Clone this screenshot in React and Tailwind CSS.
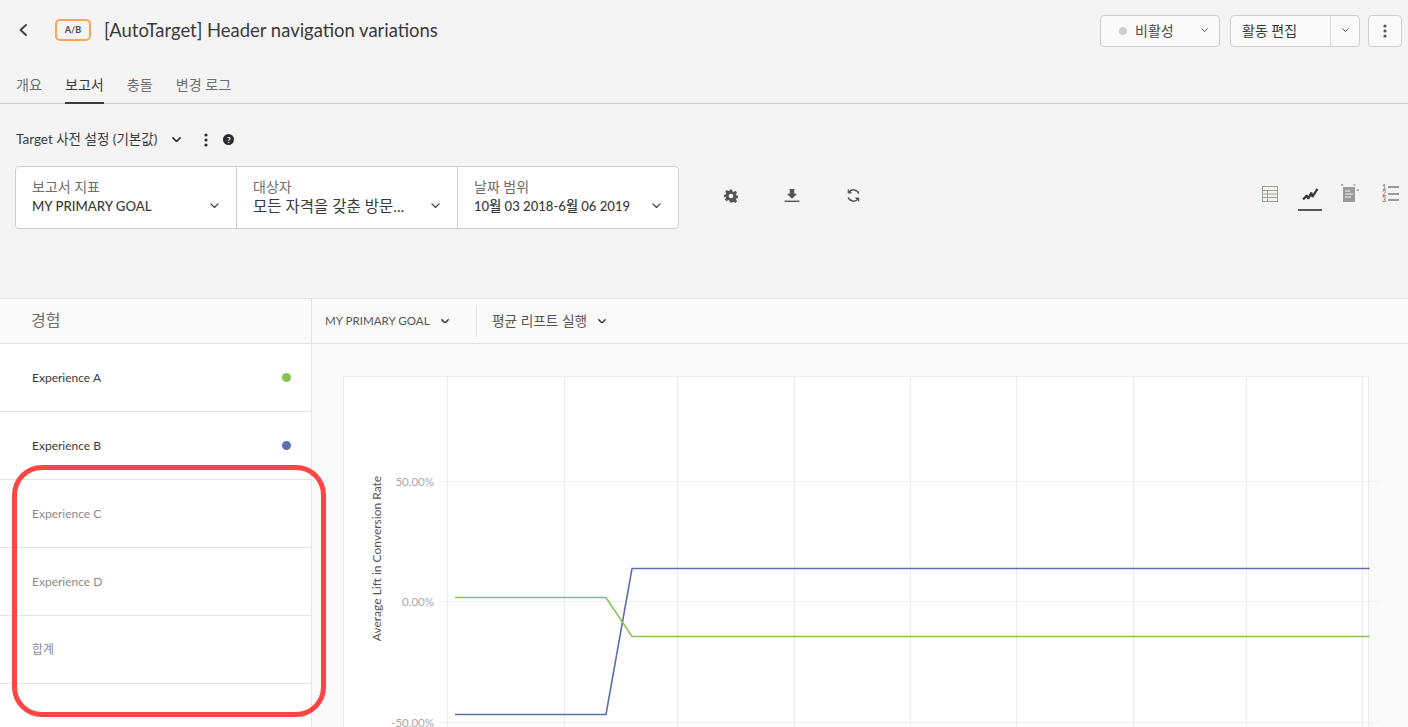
import React from "react";

function Chev({ className = "", w = 9, sw = 1.4 }) {
  return (
    <svg width={w} height={w * 0.6} viewBox="0 0 10 6" className={className} fill="none" stroke="currentColor" strokeWidth={sw} strokeLinecap="round" strokeLinejoin="round">
      <path d="M1 1l4 4 4-4" />
    </svg>
  );
}

function Dots({ color = "#2c2c2c" }) {
  return (
    <svg width="4" height="14" viewBox="0 0 4 14" fill={color}>
      <circle cx="2" cy="2" r="1.6" />
      <circle cx="2" cy="7" r="1.6" />
      <circle cx="2" cy="12" r="1.6" />
    </svg>
  );
}

function FilterCell({ label, value, width, valueClass, last }) {
  return (
    <div className={`relative flex h-full flex-col pl-4 pt-[11px] ${width} ${last ? "" : "border-r border-[#cfcfcf]"}`}>
      <div className="text-sm leading-[18px] text-[#6e6e6e]">{label}</div>
      <div className={`whitespace-nowrap leading-[20px] text-[#3a3a3a] ${valueClass}`}>{value}</div>
      <Chev className="absolute right-[17px] top-[36px] text-[#444]" />
    </div>
  );
}

function Row({ name, dot, muted }) {
  return (
    <div className="flex h-[68px] items-center justify-between border-b border-[#e4e4e4] pl-8 pr-5">
      <span className={`text-xs ${muted ? "text-[#8a8a8a]" : "text-[#3a3a3a]"}`}>{name}</span>
      {dot && <span className={`h-[9px] w-[9px] rounded-full ${dot}`} />}
    </div>
  );
}

function Chart() {
  const vs = [447, 564, 677, 794, 910, 1016, 1133, 1246, 1362];
  return (
    <svg width="1096" height="383" viewBox="312 344 1096 383" className="block">
      <rect x="343.5" y="376.5" width="1025" height="360" fill="#fff" stroke="#ececec" />
      {vs.map((x) => (
        <line key={x} x1={x + 0.5} x2={x + 0.5} y1="377" y2="727" stroke="#ececec" />
      ))}
      {[481.5, 601.5, 722.5].map((y) => (
        <line key={y} x1="441" x2="1379" y1={y} y2={y} stroke="#efefef" />
      ))}
      <g fontSize="11.5" fill="#a8a8a8" textAnchor="end" fontFamily="Lato, 'Noto Sans', sans-serif">
        <text x="434" y="485.5">50.00%</text>
        <text x="434" y="605.5">0.00%</text>
        <text x="434" y="726.5">-50.00%</text>
      </g>
      <text transform="translate(381 558.5) rotate(-90)" textAnchor="middle" fontSize="12" fill="#555" fontFamily="Lato, 'Noto Sans', sans-serif">
        Average Lift in Conversion Rate
      </text>
      <polyline points="455,714.5 606,714.5 632,568.5 1369.5,568.5" fill="none" stroke="#5a6fae" strokeWidth="1.6" />
      <polyline points="455,597.5 606,597.5 632,636.5 1369.5,636.5" fill="none" stroke="#8cc152" strokeWidth="1.6" />
    </svg>
  );
}

export default function App() {
  return (
    <div className="relative h-[727px] w-[1408px] overflow-hidden bg-[#f4f4f4] text-[#2c2c2c] font-['Lato','Noto_Sans_CJK_KR',sans-serif]">
      {/* Top header */}
      <div className="flex h-[61px] items-center pl-[18px] pr-[6px]">
        <svg width="10" height="14" viewBox="0 0 10 14" fill="none" stroke="#444" strokeWidth="2" strokeLinecap="round" strokeLinejoin="round" className="-mt-[2px]">
          <path d="M8 2L2.5 7 8 12" />
        </svg>
        <div className="ml-[27px] -mt-[1px] flex h-[22px] w-[36px] items-center justify-center rounded-[5px] border-2 border-[#f5a55c] text-[9px] font-bold text-[#4a4a4a]">A/B</div>
        <h1 className="ml-[13px] whitespace-nowrap text-[18.45px] font-normal text-[#3a3a3a]">[AutoTarget] Header navigation variations</h1>
        <div className="ml-auto flex items-center">
          <div className="flex h-8 w-[120px] items-center rounded border border-[#cfcfcf] bg-[#fafafa] pl-[18px] text-sm text-[#4a4a4a]">
            <span className="h-2 w-2 rounded-full bg-[#cfcfcf]" />
            <span className="ml-2">비활성</span>
            <Chev w={7} className="ml-auto mr-[11px] text-[#555]" />
          </div>
          <div className="ml-[10px] flex h-8 w-[130px] items-center rounded border border-[#cfcfcf] bg-[#fafafa] text-sm text-[#3a3a3a]">
            <span className="flex h-full w-[100px] items-center border-r border-[#d8d8d8] pl-[11px]">활동 편집</span>
            <Chev w={7} className="ml-[11px] text-[#555]" />
          </div>
          <div className="ml-2 flex h-8 w-[34px] items-center justify-center rounded border border-[#cfcfcf] bg-[#fafafa]">
            <Dots color="#555" />
          </div>
        </div>
      </div>

      {/* Tabs */}
      <div className="flex h-[43px] items-start gap-[23px] border-b border-[#cfcfcf] pl-4 text-[14.1px] leading-[20px] text-[#6e6e6e]">
        <span className="mt-[14px]">개요</span>
        <span className="flex h-[43px] items-start border-b-2 border-[#3a3a3a] pt-[14px] text-[#3a3a3a]">보고서</span>
        <span className="mt-[14px]">충돌</span>
        <span className="mt-[14px]">변경 로그</span>
      </div>

      {/* Preset line */}
      <div className="flex h-[62px] items-center pt-[9px] pl-4 text-[13.5px] text-[#3a3a3a]">
        <span>Target 사전 설정 (기본값)</span>
        <Chev w={9} sw={1.8} className="ml-[15px] text-[#2c2c2c]" />
        <span className="ml-[23px] flex"><Dots /></span>
        <span className="ml-[15px] flex h-[11px] w-[11px] items-center justify-center rounded-full bg-[#2c2c2c] text-[8px] font-bold leading-none text-white">?</span>
      </div>

      {/* Filters + tools */}
      <div className="relative flex h-[132px] items-start pl-[15px]">
        <div className="flex h-[63px] items-center overflow-hidden rounded border border-[#cfcfcf] bg-white">
          <FilterCell label="보고서 지표" value="MY PRIMARY GOAL" width="w-[221px]" valueClass="text-[13.2px] font-medium" />
          <FilterCell label="대상자" value="모든 자격을 갖춘 방문..." width="w-[221px]" valueClass="text-[15.5px]" />
          <FilterCell label="날짜 범위" value="10월 03 2018-6월 06 2019" width="w-[220px]" valueClass="text-[13.1px] font-medium" last />
        </div>
        <div className="ml-[45px] mt-[22px] flex items-center gap-[46px]">
          <svg width="14" height="14" viewBox="0 0 24 24" fill="#555" fillRule="evenodd">
            <path d="M10 1h4l.7 3.2 2 .8 2.8-1.8 2.8 2.8-1.8 2.8.8 2 3.2.7v4l-3.2.7-.8 2 1.8 2.8-2.8 2.8-2.8-1.8-2 .8L14 23h-4l-.7-3.2-2-.8-2.8 1.8-2.8-2.8 1.8-2.8-.8-2L0 14v-4l3.2-.7.8-2L2.2 4.5 5 1.7l2.8 1.8 2-.8z M12 8a4 4 0 100 8 4 4 0 000-8z" />
          </svg>
          <svg width="16" height="13" viewBox="0 0 16 14" fill="#555">
            <path d="M5.5 0h5v5h3L8 10.5 2.500 5h3z" />
            <rect x="0" y="12.500" width="16" height="1.500" />
          </svg>
          <svg width="15" height="15" viewBox="0 0 24 24" fill="none" stroke="#555" strokeWidth="2.400">
            <path d="M20.500 9A9 9 0 004.500 7" />
            <path d="M3.500 15A9 9 0 0019.500 17" />
            <path d="M3.500 2.500V8H9" fill="#555" strokeWidth="1.500" />
            <path d="M20.500 21.500V16H15" fill="#555" strokeWidth="1.500" />
          </svg>
        </div>
        <div className="absolute left-[1262px] top-[18px] flex items-start">
          <svg width="16" height="16" viewBox="0 0 16 16" fill="none" stroke="#9aa39a" className="mt-[2px]">
            <rect x="0.500" y="0.500" width="15" height="15" />
            <path d="M0.500 4.500h15M0.500 8h15M0.500 11.500h15M5.500 4.500v11" />
          </svg>
          <div className="ml-5 flex h-[27px] w-6 flex-col items-center border-b-2 border-[#555] pt-[4px]">
            <svg width="17" height="13" viewBox="0 0 18 14" fill="none" stroke="#3a3a3a" strokeWidth="2.400" strokeLinejoin="bevel">
              <path d="M1 12.500L5 8l1.500 3.500L10 5l1 4.500L16.500 1" />
            </svg>
          </div>
          <svg width="18" height="18" viewBox="0 0 18 18" className="ml-[19px]" fill="#9a9a9a">
            <path d="M2 3h12v15H2z" />
            <path d="M4 7h5M4 10h8M4 13h6" stroke="#f4f4f4" strokeWidth="1" />
            <path d="M0 0l2 1.500M14 0l-1 1.500M15.500 6h2.500" stroke="#9a9a9a" strokeWidth="1.500" />
          </svg>
          <div className="ml-[23px] flex items-start">
            <div className="flex w-[6px] flex-col text-[7px] font-bold leading-[6px] text-[#8a8a8a]">
              <span>1</span><span>2</span><span>3</span>
            </div>
            <div className="mt-[2px] flex flex-col gap-[4.500px]">
              <span className="block h-[2px] w-[11px] bg-[#9a9a9a]" />
              <span className="block h-[2px] w-[11px] bg-[#9a9a9a]" />
              <span className="block h-[2px] w-[11px] bg-[#9a9a9a]" />
            </div>
          </div>
        </div>
      </div>

      {/* Lower section */}
      <div className="flex h-[429px] border-t border-[#e4e4e4] bg-[#fafafa]">
        <div className="w-[312px] shrink-0 border-r border-[#e4e4e4]">
          <div className="flex h-[45px] items-center border-b border-[#e4e4e4] pb-[3px] pl-[31px] text-base text-[#6e6e6e]">경험</div>
          <div className="h-full bg-white">
            <Row name="Experience A" dot="bg-[#8cc152]" />
            <Row name="Experience B" dot="bg-[#5a6fae]" />
            <Row name="Experience C" muted />
            <Row name="Experience D" muted />
            <Row name="합계" muted />
          </div>
        </div>
        <div className="min-w-0 flex-1">
          <div className="flex h-[45px] items-center border-b border-[#e4e4e4] text-[#555]">
            <div className="flex h-[32px] w-[165px] items-center border-r border-[#e8e8e8] pl-[13px]">
              <span className="text-[11.600px]">MY PRIMARY GOAL</span>
              <Chev w={8} sw={1.8} className="ml-[11px] text-[#2c2c2c]" />
            </div>
            <div className="flex items-center pl-[15px]">
              <span className="text-[13.700px]">평균 리프트 실행</span>
              <Chev w={8} sw={1.8} className="ml-[11px] text-[#2c2c2c]" />
            </div>
          </div>
          <Chart />
        </div>
      </div>

      {/* Annotation */}
      <div className="pointer-events-none absolute left-[12px] top-[465px] h-[252px] w-[314px] rounded-[30px] border-[5px] border-[#ff4444]" />
    </div>
  );
}
